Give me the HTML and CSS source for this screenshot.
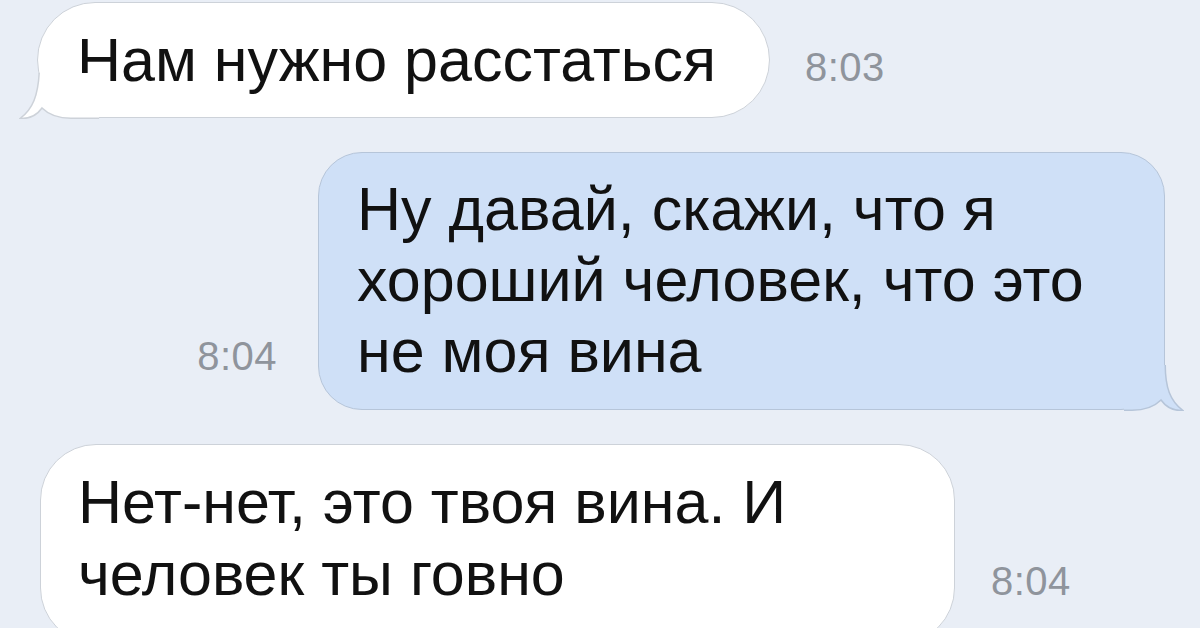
FILE: index.html
```html
<!DOCTYPE html>
<html lang="ru">
<head>
    <meta charset="UTF-8">
    <meta name="viewport" content="width=device-width, initial-scale=1.0">
    <title>Сообщения</title>
    <link rel="stylesheet" href="styles.css">
</head>
<body>
    <div class="chat">
        <div class="row row-in">
            <div class="bubble bubble-in b1">
                Нам нужно расстаться
                <svg class="tail tail-in" width="80" height="46" viewBox="0 0 80 46">
                    <path d="M20.2 0 C19 22 14 36 1 45.5 C10 46 18 42 23 35 C29 41 38 45.25 52 45.25 L80 45.25 L80 0 Z" fill="#fff"/>
                    <path d="M20.2 0 C19 22 14 36 1 45.5 C10 46 18 42 23 35 C29 41 38 45.25 52 45.25 L80 45.25" fill="none" stroke="#cdd2d9" stroke-width="1.5"/>
                </svg>
            </div>
            <span class="time t1">8:03</span>
        </div>

        <div class="row row-out">
            <span class="time t2">8:04</span>
            <div class="bubble bubble-out b2">
                Ну давай, скажи, что я<br>
                хороший человек, что это<br>
                не моя вина
                <svg class="tail tail-out" width="60" height="46" viewBox="0 0 60 46">
                    <path d="M41.25 0 C41.25 22 46 36 59 45.5 C50 46 42 42 37 35 C31 41 22 45.25 8 45.25 L0 45.25 L0 0 Z" fill="#cfe0f7"/>
                    <path d="M41.25 0 C41.25 22 46 36 59 45.5 C50 46 42 42 37 35 C31 41 22 45.25 8 45.25 L0 45.25" fill="none" stroke="#b6c5d9" stroke-width="1.5"/>
                </svg>
            </div>
        </div>

        <div class="row row-in">
            <div class="bubble bubble-in b3">
                Нет-нет, это твоя вина. И<br>
                человек ты говно
            </div>
            <span class="time t3">8:04</span>
        </div>
    </div>
</body>
</html>
```

FILE: styles.css
```css
body {
    margin: 0;
    background: #e9eef6;
    font-family: "Liberation Sans", Arial, sans-serif;
    color: #111;
    overflow: hidden;
}
.chat {
    display: flex;
    flex-direction: column;
    gap: 34px;
    padding: 2px 0 0 37px;
    width: 1128px;
}
.row {
    display: flex;
    align-items: flex-start;
}
.row-out {
    justify-content: flex-end;
}
.bubble {
    position: relative;
    box-sizing: border-box;
    font-size: 61px;
    line-height: 71px;
    border: 1.5px solid #cdd2d9;
    white-space: nowrap;
}
.bubble-in {
    background: #fff;
}
.bubble-out {
    background: #cfe0f7;
    border-color: #b6c5d9;
}
.b1 {
    width: 733px;
    height: 116px;
    padding: 22px 0 0 39px;
    border-radius: 58px;
}
.b2 {
    width: 847px;
    height: 258px;
    padding: 21px 0 0 38px;
    border-radius: 44px;
}
.b3 {
    width: 915px;
    height: 200px;
    margin-left: 3px;
    padding: 21px 0 0 37px;
    line-height: 72px;
    border-radius: 56px;
}
.tail {
    position: absolute;
    bottom: -1.5px;
}
.tail-in {
    left: -19.5px;
}
.tail-out {
    right: -19.5px;
}
.time {
    font-size: 40px;
    line-height: 40px;
    color: #8f949c;
    letter-spacing: 0.5px;
}
.t1 {
    margin: 45px 0 0 35px;
}
.t2 {
    margin: 184px 41px 0 0;
}
.t3 {
    margin: 117px 0 0 36px;
}
```
